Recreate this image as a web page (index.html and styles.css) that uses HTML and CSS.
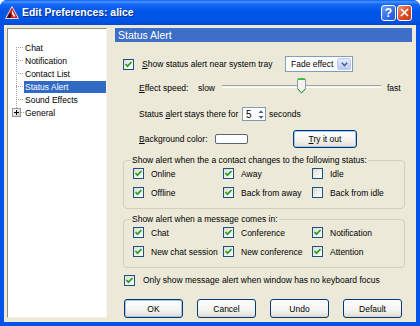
FILE: index.html
```html
<!DOCTYPE html>
<html lang="en">
<head>
  <meta charset="UTF-8">
  <title>Edit Preferences: alice</title>
  <link rel="stylesheet" href="styles.css">
</head>
<body>
  <div class="window">
    <div class="titlebar">
      <svg class="app-icon" width="14" height="13" viewBox="0 0 14 13">
        <path d="M7 0.5 L13.5 12.5 H0.5 Z" fill="#D81E1E" stroke="#fff" stroke-width="0.8"/>
        <path d="M7 4 L10.5 10.5 H8.5 L7 7.5 Z" fill="#fff"/>
        <path d="M2 12 L5 6.5 L6.5 9.5 L5 12 Z" fill="#111"/>
      </svg>
      <span class="title">Edit Preferences: alice</span>
      <div class="caption">
        <span class="cap cap-help">?</span>
        <span class="cap cap-close">
          <svg width="9" height="9" viewBox="0 0 9 9"><path d="M1 1 L8 8 M8 1 L1 8" stroke="#fff" stroke-width="1.7"/></svg>
        </span>
      </div>
    </div>

    <div class="client">
      <div class="tree">
        <ul class="tree-list">
          <li><span class="twig"></span><span class="node">Chat</span></li>
          <li><span class="twig"></span><span class="node">Notification</span></li>
          <li><span class="twig"></span><span class="node">Contact List</span></li>
          <li><span class="twig"></span><span class="node sel">Status Alert</span></li>
          <li><span class="twig"></span><span class="node">Sound Effects</span></li>
          <li>
            <span class="expander"><svg width="7" height="7" viewBox="0 0 7 7"><path d="M1 3.5 H6 M3.5 1 V6" stroke="#000" stroke-width="1"/></svg></span>
            <span class="twig short"></span><span class="node">General</span>
          </li>
        </ul>
      </div>

      <div class="panel">
        <div class="panel-head">Status Alert</div>

        <div class="row r-show">
          <span class="check on"><svg width="9" height="9" viewBox="0 0 9 9"><path d="M1.5 4 L3.5 6.2 L7.5 2" fill="none" stroke="#21A121" stroke-width="1.7"/></svg></span>
          <span class="show-label"><u>S</u>how status alert near system tray</span>
          <span class="combo">Fade effect<span class="combo-btn"><svg width="7" height="5" viewBox="0 0 7 5"><path d="M0.8 0.8 L3.5 3.6 L6.2 0.8" fill="none" stroke="#4D6185" stroke-width="1.5"/></svg></span></span>
        </div>

        <div class="row r-speed">
          <span class="speed-label"><u>E</u>ffect speed:</span>
          <span class="slow">slow</span>
          <div class="slider">
            <div class="track"></div>
            <svg class="thumb" width="9" height="16" viewBox="0 0 9 16">
              <path d="M0.5 1.5 Q0.5 0.5 1.5 0.5 H7.5 Q8.5 0.5 8.5 1.5 V11 L4.5 15.3 L0.5 11 Z" fill="#F4F3EE" stroke="#8E9BA6"/>
              <path d="M1 1.2 H8" stroke="#2CC92C" stroke-width="1.6"/>
              <path d="M1 11 L4.5 14.6 L8 11" fill="none" stroke="#2CB22C" stroke-width="1"/>
            </svg>
          </div>
          <span class="fast">fast</span>
        </div>

        <div class="row r-stay">
          <span class="stay-label">Status <u>a</u>lert stays there for</span>
          <span class="spin">5<span class="spin-btns"><svg width="6" height="11" viewBox="0 0 6 11"><path d="M0.5 4 L3 1.2 L5.5 4 Z M0.5 7 L3 9.8 L5.5 7 Z" fill="#4D6185"/></svg></span></span>
          <span class="seconds">seconds</span>
        </div>

        <div class="row r-bg">
          <span class="bg-label"><u>B</u>ackground color:</span>
          <span class="color-box"></span>
          <button class="btn try"><u>T</u>ry it out</button>
        </div>

        <div class="group">
          <div class="legend">Show alert when the a contact changes to the following status:</div>
          <div class="opts">
            <label class="opt"><span class="check on"><svg width="9" height="9" viewBox="0 0 9 9"><path d="M1.5 4 L3.5 6.2 L7.5 2" fill="none" stroke="#21A121" stroke-width="1.7"/></svg></span>Online</label>
            <label class="opt"><span class="check on"><svg width="9" height="9" viewBox="0 0 9 9"><path d="M1.5 4 L3.5 6.2 L7.5 2" fill="none" stroke="#21A121" stroke-width="1.7"/></svg></span>Away</label>
            <label class="opt"><span class="check"></span>Idle</label>
            <label class="opt"><span class="check on"><svg width="9" height="9" viewBox="0 0 9 9"><path d="M1.5 4 L3.5 6.2 L7.5 2" fill="none" stroke="#21A121" stroke-width="1.7"/></svg></span>Offline</label>
            <label class="opt"><span class="check on"><svg width="9" height="9" viewBox="0 0 9 9"><path d="M1.5 4 L3.5 6.2 L7.5 2" fill="none" stroke="#21A121" stroke-width="1.7"/></svg></span>Back from away</label>
            <label class="opt"><span class="check"></span>Back from idle</label>
          </div>
        </div>

        <div class="group group-msg">
          <div class="legend">Show alert when a message comes in:</div>
          <div class="opts">
            <label class="opt"><span class="check on"><svg width="9" height="9" viewBox="0 0 9 9"><path d="M1.5 4 L3.5 6.2 L7.5 2" fill="none" stroke="#21A121" stroke-width="1.7"/></svg></span>Chat</label>
            <label class="opt"><span class="check on"><svg width="9" height="9" viewBox="0 0 9 9"><path d="M1.5 4 L3.5 6.2 L7.5 2" fill="none" stroke="#21A121" stroke-width="1.7"/></svg></span>Conference</label>
            <label class="opt"><span class="check on"><svg width="9" height="9" viewBox="0 0 9 9"><path d="M1.5 4 L3.5 6.2 L7.5 2" fill="none" stroke="#21A121" stroke-width="1.7"/></svg></span>Notification</label>
            <label class="opt"><span class="check on"><svg width="9" height="9" viewBox="0 0 9 9"><path d="M1.5 4 L3.5 6.2 L7.5 2" fill="none" stroke="#21A121" stroke-width="1.7"/></svg></span>New chat session</label>
            <label class="opt"><span class="check on"><svg width="9" height="9" viewBox="0 0 9 9"><path d="M1.5 4 L3.5 6.2 L7.5 2" fill="none" stroke="#21A121" stroke-width="1.7"/></svg></span>New conference</label>
            <label class="opt"><span class="check on"><svg width="9" height="9" viewBox="0 0 9 9"><path d="M1.5 4 L3.5 6.2 L7.5 2" fill="none" stroke="#21A121" stroke-width="1.7"/></svg></span>Attention</label>
          </div>
        </div>

        <div class="row r-focus">
          <span class="check on"><svg width="9" height="9" viewBox="0 0 9 9"><path d="M1.5 4 L3.5 6.2 L7.5 2" fill="none" stroke="#21A121" stroke-width="1.7"/></svg></span>
          <span>Only show message alert when window has no keyboard focus</span>
        </div>

        <div class="actions">
          <button class="btn default">OK</button>
          <button class="btn">Cancel</button>
          <button class="btn">Undo</button>
          <button class="btn">Default</button>
        </div>
      </div>
    </div>
  </div>
</body>
</html>
```

FILE: styles.css
```css
* {
  box-sizing: border-box;
}
body {
  margin: 0;
  background: #fff;
  font-family: "Liberation Sans", Arial, sans-serif;
  font-size: 8.5px;
  color: #000;
}
.window {
  width: 420px;
  height: 326px;
  display: flex;
  flex-direction: column;
  background: #0553E8;
  border-radius: 7px 7px 0 0;
  overflow: hidden;
}

/* title bar */
.titlebar {
  height: 25px;
  flex: none;
  display: flex;
  align-items: center;
  padding: 0 8px 0 5px;
  background: linear-gradient(#0B5FF0 0%, #4493FF 7%, #1566F4 18%, #0056E8 45%, #0053E4 85%, #0048D6 100%);
}
.app-icon {
  flex: none;
}
.title {
  margin-left: 3px;
  color: #fff;
  font-weight: bold;
  font-size: 10.4px;
  text-shadow: 1px 1px 0 #0B2E92;
}
.caption {
  margin-left: auto;
  display: flex;
  gap: 1px;
}
.cap {
  width: 15px;
  height: 16px;
  border: 1px solid #fff;
  border-radius: 3px;
  display: flex;
  align-items: center;
  justify-content: center;
}
.cap-help {
  background: linear-gradient(135deg, #6A9EFA, #2C63E4 70%, #2456D6);
  color: #fff;
  font-weight: bold;
  font-size: 12px;
}
.cap-close {
  background: linear-gradient(135deg, #EE8F6C, #D94A24 60%, #C63A16);
}

/* client area */
.client {
  flex: 1;
  margin: 0 4px 4px 4px;
  padding: 3px 4px 4px 3px;
  background: #ECE9D8;
  display: flex;
  gap: 8px;
}

/* tree */
.tree {
  width: 100px;
  flex: none;
  background: #fff;
  border: 1px solid;
  border-color: #8E8D86 #F4F3EE #F4F3EE #8E8D86;
}
.tree-list {
  list-style: none;
  margin: 12px 0 0 8px;
  padding: 0;
  background-image: repeating-linear-gradient(to bottom, #A3A3A3 0 1px, transparent 1px 2px);
  background-size: 1px calc(100% - 12px);
  background-position: 0 6px;
  background-repeat: no-repeat;
}
.tree-list li {
  display: flex;
  align-items: center;
  height: 13px;
}
.twig {
  width: 8px;
  height: 1px;
  flex: none;
  background: repeating-linear-gradient(to right, #A3A3A3 0 1px, transparent 1px 2px);
}
.twig.short {
  width: 3px;
}
.expander {
  width: 9px;
  height: 9px;
  margin-left: -4px;
  flex: none;
  border: 1px solid #919B9C;
  background: linear-gradient(135deg, #fff, #CFCCBE);
  display: flex;
  align-items: center;
  justify-content: center;
}
.node {
  flex: 1;
  height: 12px;
  line-height: 12px;
  padding: 0 2px 0 1px;
  white-space: nowrap;
}
.node.sel {
  background: #316AC5;
  color: #fff;
}

/* right panel */
.panel {
  flex: 1;
  display: flex;
  flex-direction: column;
}
.panel-head {
  height: 14px;
  line-height: 14px;
  padding-left: 3px;
  background: #3D6FC8;
  color: #fff;
  font-size: 10.5px;
}
.row {
  display: flex;
  align-items: center;
  height: 16px;
  white-space: nowrap;
}
.check {
  width: 11px;
  height: 11px;
  flex: none;
  margin-right: 8px;
  border: 1px solid #1C5180;
  background: linear-gradient(135deg, #DCDBD3, #F6F6F3 70%, #fff);
  display: flex;
  align-items: center;
  justify-content: center;
}
.r-show {
  margin-top: 14px;
  padding-left: 8px;
}
.show-label {
  width: 143px;
}
.combo {
  width: 68px;
  height: 16px;
  border: 1px solid #7F9DB9;
  background: #fff;
  display: flex;
  align-items: center;
  padding: 0 1px 0 5px;
  white-space: nowrap;
}
.combo-btn {
  margin-left: auto;
  width: 14px;
  height: 12px;
  flex: none;
  border: 1px solid #B9CBF3;
  border-radius: 2px;
  background: linear-gradient(#E3EBFD, #B7CAF6);
  display: flex;
  align-items: center;
  justify-content: center;
}
.r-speed {
  margin-top: 8px;
  padding-left: 24px;
}
.speed-label {
  width: 59px;
}
.slow {
  width: 24px;
}
.slider {
  position: relative;
  width: 159px;
  height: 16px;
}
.track {
  margin-top: 5px;
  height: 3px;
  border-top: 1px solid #A3A29E;
  border-bottom: 1px solid #fff;
  background: #F2F1EC;
}
.thumb {
  position: absolute;
  left: 75px;
  top: -2px;
}
.fast {
  margin-left: 6px;
}
.r-stay {
  margin-top: 10px;
  padding-left: 24px;
}
.stay-label {
  width: 103px;
}
.spin {
  width: 24px;
  height: 14px;
  border: 1px solid #7F9DB9;
  background: #fff;
  display: flex;
  align-items: center;
  padding: 0 1px 0 3px;
  font-size: 10px;
}
.spin-btns {
  margin-left: auto;
  display: flex;
}
.seconds {
  margin-left: 3px;
}
.r-bg {
  height: 18px;
  margin-top: 8px;
  padding-left: 24px;
}
.bg-label {
  width: 76px;
}
.color-box {
  width: 33px;
  height: 10px;
  border: 1px solid #5B6670;
  border-radius: 2px;
  background: #fff;
}
.btn {
  height: 19px;
  padding: 0;
  font-family: "Liberation Sans", Arial, sans-serif;
  font-size: 8.5px;
  color: #000;
  border: 1px solid #003C74;
  border-radius: 3px;
  background: linear-gradient(#FFFFFF, #F3F2EE 60%, #E6E3DA 90%, #D6D0C5);
}
.btn.try {
  width: 64px;
  height: 18px;
  margin-left: 45px;
}
.btn.default,
.btn.try {
  box-shadow: inset 0 0 0 1px #A8C3F2;
}

/* group boxes */
.group {
  margin: 12px 7px 0 8px;
  padding: 0 0 6px 9px;
  border: 1px solid #D0D0BF;
  border-radius: 4px;
}
.group-msg {
  margin-top: 10px;
}
.legend {
  width: max-content;
  height: 11px;
  line-height: 11px;
  margin: -6px 0 -2px -2px;
  padding: 0 1px;
  background: #ECE9D8;
  white-space: nowrap;
}
.opts {
  display: grid;
  grid-template-columns: 90px 89px 1fr;
  grid-auto-rows: 19px;
}
.opt {
  display: flex;
  align-items: center;
  white-space: nowrap;
}
.opt .check {
  margin-right: 7px;
}
.r-focus {
  margin-top: 4px;
  padding-left: 9px;
}
.actions {
  margin-top: 11px;
  padding: 0 10px 0 9px;
  display: flex;
  justify-content: space-between;
}
.actions .btn {
  width: 59px;
}
```
